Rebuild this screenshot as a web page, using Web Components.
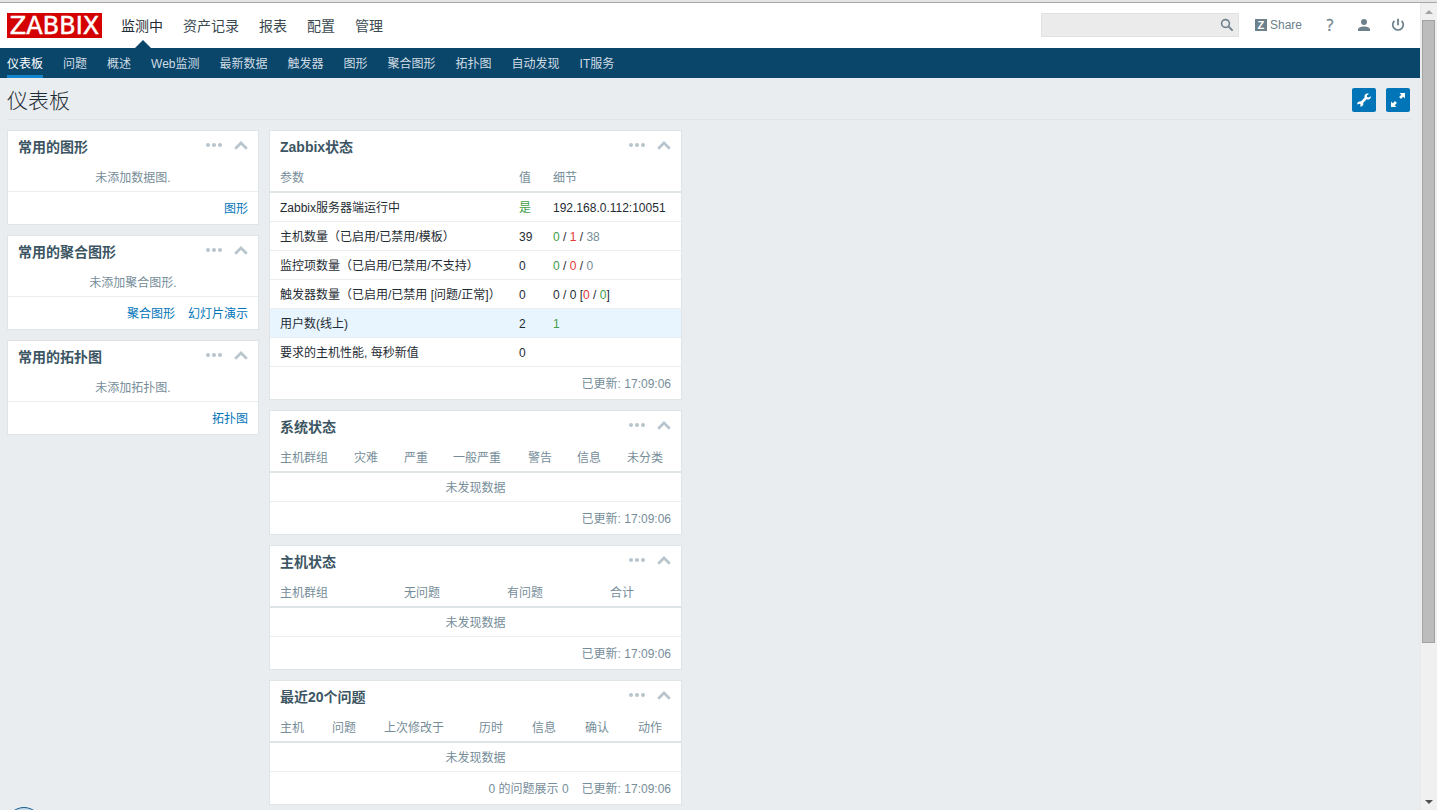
<!DOCTYPE html>
<html lang="zh-CN">
<head>
<meta charset="utf-8">
<title>Zabbix - 仪表板</title>
<style>
  html, body { margin: 0; height: 100%; }
  body {
    overflow: hidden;
    font: 12px/16px "Liberation Sans", "Noto Sans CJK SC", sans-serif;
    color: #1f2c33;
    background: #e9edf0;
  }
</style>
</head>
<body>
<zbx-app></zbx-app>
<script>
const define = (name, html, setup) => {
  const template = document.createElement('template');
  template.innerHTML = html;
  customElements.define(name, class extends HTMLElement {
    constructor() {
      super();
      this.attachShadow({ mode: 'open' }).append(template.content.cloneNode(true));
    }
    connectedCallback() { if (setup) setup(this, this.shadowRoot); }
  });
};

/* ---------- icons ---------- */
const ICONS = {
  search: [14, 14, '<circle cx="5.5" cy="5.5" r="3.9" fill="none" stroke="currentColor" stroke-width="1.6"/><path d="M8.4 8.4 12.6 12.6" stroke="currentColor" stroke-width="2"/>'],
  user: [12, 12, '<circle cx="6" cy="3" r="3" fill="currentColor"/><path d="M0 12V10.8C0 8.6 2.8 7.6 6 7.6s6 1 6 3.2V12z" fill="currentColor"/>'],
  power: [14, 14, '<path d="M3.400 2.800A5.300 5.300 0 1 0 10.600 2.800" fill="none" stroke="currentColor" stroke-width="1.7"/><path d="M7 .8V7.200" stroke="currentColor" stroke-width="1.8"/>'],
  wrench: [24, 24, '<path d="M18.900 8.200 16.600 9.500 15 8.900 14.900 7.500 16.900 5.700C15.100 5.100 13.300 5.700 12.700 7.300 12.400 8.100 12.400 8.900 12.600 9.500L9.200 13.300C7.600 12.900 5.800 13.800 5.200 15.400L5.200 16.500 7.400 15.700 8.600 16.600 8.200 18.500 9.200 18.500C10.900 18 11.600 16.500 11.200 14.900L14.600 11.300C15.600 11.600 16.600 11.600 17.500 11 18.600 10.300 19.100 9.300 18.900 8.200Z" fill="currentColor"/>'],
  expand: [24, 24, '<path d="M13.500 5H19V10.500L17.200 8.700 15 10.900 13.100 9 15.300 6.800ZM5 13.500 6.800 15.300 9 13.100 10.900 15 8.700 17.200 10.500 19H5Z" fill="currentColor"/>'],
  dots: [16, 4, '<circle cx="2" cy="2" r="2" fill="currentColor"/><circle cx="8" cy="2" r="2" fill="currentColor"/><circle cx="14" cy="2" r="2" fill="currentColor"/>'],
  chevron: [14, 9, '<path d="M1.200 7.700 7 2 12.800 7.700" fill="none" stroke="currentColor" stroke-width="2.700"/>'],
  up: [8, 4, '<path d="M0 4 4 0 8 4Z" fill="currentColor"/>'],
  down: [8, 4, '<path d="M0 0H8L4 4Z" fill="currentColor"/>']
};
define('zbx-icon', `<style>:host{display:block;flex:none}svg{display:block}</style>`, (host, root) => {
  const [w, h, body] = ICONS[host.getAttribute('name')];
  root.innerHTML += `<svg width="${w}" height="${h}" viewBox="0 0 ${w} ${h}" aria-hidden="true">${body}</svg>`;
});

/* ---------- header ---------- */
define('zbx-logo', `
<style>
  :host { display: block; }
  a { display: flex; align-items: center; justify-content: center; box-sizing: border-box; width: 95px; height: 25px;
      padding-top: 1px; background: #d40000; color: #fff; text-decoration: none;
      font: 24px/24px "DejaVu Sans", sans-serif; -webkit-text-stroke: 0.5px #fff; }
</style>
<a href="#">ZABBIX</a>`);

define('zbx-header', `
<style>
  :host { display: flex; align-items: center; box-sizing: border-box; height: 45px; padding: 0 15px 0 7px; background: #fff; }
  nav { display: flex; gap: 20px; margin-left: 19px; align-self: stretch; }
  nav a { display: flex; align-items: center; position: relative; color: #3c4a52;
          font-size: 14px; text-decoration: none; }
  nav a.on { color: #1f2c33; }
  nav a.on::after { content: ""; position: absolute; bottom: 0; left: 50%; margin-left: -7px;
          border: 8px solid transparent; border-top: 0; border-bottom-color: #0a466a; }
  form { display: flex; align-items: center; box-sizing: border-box; width: 198px; height: 24px;
         margin: 0 0 1px auto; background: #ebebeb; border: 1px solid #e0e3e4; }
  input { flex: 1; min-width: 0; height: 22px; padding: 0 5px; border: 0; outline: 0; background: none; font: inherit; }
  button { padding: 0; border: 0; background: none; color: #6d818c; cursor: pointer; font: inherit; }
  form button { margin-right: 4px; }
  .tools { display: flex; align-items: center; margin: 0 0 2px 16px; color: #6d818c; }
  .share { display: flex; align-items: center; gap: 3px; color: #6d818c; text-decoration: none; }
  .share b { width: 12px; height: 12px; background: #6d818c; color: #fff; text-align: center; font-size: 11px; line-height: 12px; }
  .help { width: 12px; margin-left: 22px; text-align: center; color: #6d818c; text-decoration: none;
          font: 16px/20px "Open Sans", sans-serif; -webkit-text-stroke: 0.3px; }
  .user { margin-left: 22px; }
  .power { margin-left: 21px; }
</style>
<zbx-logo></zbx-logo>
<nav><a class="on" href="#">监测中</a><a href="#">资产记录</a><a href="#">报表</a><a href="#">配置</a><a href="#">管理</a></nav>
<form><input type="text" aria-label="搜索"><button type="button" aria-label="搜索"><zbx-icon name="search"></zbx-icon></button></form>
<div class="tools">
  <a class="share" href="#"><b>Z</b>Share</a>
  <a class="help" href="#">?</a>
  <button class="user" aria-label="用户"><zbx-icon name="user"></zbx-icon></button>
  <button class="power" aria-label="退出"><zbx-icon name="power"></zbx-icon></button>
</div>`);

define('zbx-subnav', `
<style>
  :host { display: block; background: #0a466a; }
  nav { display: flex; gap: 20px; height: 30px; padding: 0 7px; }
  a { display: flex; align-items: center; box-sizing: border-box; padding-top: 2px; border: solid transparent; border-width: 3px 0;
      color: #d0dce4; text-decoration: none; white-space: nowrap; }
  a.on { color: #fff; border-bottom-color: #1485cc; }
</style>
<nav><a class="on" href="#">仪表板</a><a href="#">问题</a><a href="#">概述</a><a href="#">Web监测</a><a href="#">最新数据</a><a href="#">触发器</a><a href="#">图形</a><a href="#">聚合图形</a><a href="#">拓扑图</a><a href="#">自动发现</a><a href="#">IT服务</a></nav>`);

define('zbx-title', `
<style>
  :host { display: flex; align-items: center; gap: 10px; box-sizing: border-box; height: 42px;
          margin: 0 10px 10px 7px; border-bottom: 1px solid #dfe4e7; padding-top: 2px; }
  h1 { flex: 1; margin: 0; padding-top: 2px; font-size: 21px; line-height: 24px; font-weight: 300; }
  button { width: 24px; height: 24px; padding: 0; border: 0; border-radius: 2px; background: #0275b8; color: #fff; }
</style>
<h1><slot></slot></h1>
<button aria-label="配置仪表板"><zbx-icon name="wrench"></zbx-icon></button>
<button aria-label="全屏"><zbx-icon name="expand"></zbx-icon></button>`);

/* ---------- dashboard widget ---------- */
define('zbx-widget', `
<style>
  :host { display: block; background: #fff; border: 1px solid #dfe4e7; }
  header { display: flex; align-items: center; height: 32px; padding: 0 10px; }
  h4 { flex: 1; margin: 0; font-size: 14px; color: #3c5563; }
  .acts { display: flex; align-items: center; gap: 12px; height: 28px; align-self: flex-start; }
  button { padding: 0; border: 0; background: none; color: #b8c5cc; }
  footer { display: flex; justify-content: flex-end; align-items: center; gap: 13px; box-sizing: border-box; height: 32px;
           padding: 2px 10px 0; color: #768d99; }
</style>
<header><h4></h4><div class="acts">
  <button aria-label="菜单"><zbx-icon name="dots"></zbx-icon></button>
  <button aria-label="折叠"><zbx-icon name="chevron"></zbx-icon></button></div></header>
<slot></slot>
<footer><slot name="foot"></slot></footer>`, (host, root) => {
  root.querySelector('h4').textContent = host.getAttribute('heading');
});

define('zbx-empty', `
<style>
  :host { display: block; box-sizing: border-box; height: 29px; padding-top: 1px; line-height: 28px; text-align: center; color: #768d99; border-bottom: 1px solid #ebeef0; }
</style><slot></slot>`);

define('zbx-link', `
<style>a { color: #0275b8; text-decoration: none; }</style><a href="#"><slot></slot></a>`);

/* Column weights are shared out as percentages of the table's width. */
const TABLES = {
  zabbix: {
    weights: [244, 34, 133],
    head: ['参数', '值', '细节'],
    rows: [
      ['Zabbix服务器端运行中', '<i class="g">是</i>', '192.168.0.112:10051'],
      ['主机数量（已启用/已禁用/模板）', '39', '<i class="g">0</i> / <i class="r">1</i> / <i class="n">38</i>'],
      ['监控项数量（已启用/已禁用/不支持）', '0', '<i class="g">0</i> / <i class="r">0</i> / <i class="n">0</i>'],
      ['触发器数量（已启用/已禁用 [问题/正常]）', '0', '0 / 0 [<i class="r">0</i> / <i class="g">0</i>]'],
      ['用户数(线上)', '2', '<i class="g">1</i>'],
      ['要求的主机性能, 每秒新值', '0', '']
    ],
    active: 4
  },
  system: { weights: [79, 50, 49, 75, 49, 50, 59], head: ['主机群组', '灾难', '严重', '一般严重', '警告', '信息', '未分类'] },
  hosts: { weights: [129, 103, 103, 76], head: ['主机群组', '无问题', '有问题', '合计'] },
  issues: { weights: [57, 52, 95, 53, 53, 53, 48], head: ['主机', '问题', '上次修改于', '历时', '信息', '确认', '动作'] }
};
define('zbx-table', `
<style>
  :host { display: block; }
  table { width: 100%; table-layout: fixed; border-collapse: separate; border-spacing: 0; }
  th, td { box-sizing: border-box; padding: 1px 0 0 5px; text-align: left; font-weight: normal; white-space: nowrap; }
  th:first-child, td:first-child { padding-left: 10px; }
  th { height: 30px; padding-top: 2px; color: #768d99; border-bottom: 2px solid #dfe4e7; }
  td { height: 29px; border-bottom: 1px solid #ebeef0; }
  tr.active td { background: #e8f5ff; }
  td.none { padding: 2px 0 0; text-align: center; color: #768d99; }
  i { font-style: normal; }
  .g { color: #429e47; } .r { color: #e33734; } .n { color: #768d99; }
</style>
<table></table>`, (host, root) => {
  const t = TABLES[host.getAttribute('name')];
  const sum = t.weights.reduce((a, b) => a + b, 0);
  const cols = t.weights.map(w => `<col style="width:calc(100% * ${w} / ${sum})">`).join('');
  const head = t.head.map(h => `<th scope="col">${h}</th>`).join('');
  const body = t.rows
    ? t.rows.map((r, i) => `<tr${i === t.active ? ' class="active"' : ''}>${r.map(c => `<td>${c}</td>`).join('')}</tr>`).join('')
    : `<tr><td class="none" colspan="${t.head.length}">未发现数据</td></tr>`;
  root.querySelector('table').innerHTML = `<colgroup>${cols}</colgroup><thead><tr>${head}</tr></thead><tbody>${body}</tbody>`;
});

/* ---------- window scroll bar ---------- */
define('zbx-rail', `
<style>
  :host { display: flex; flex-direction: column; box-sizing: border-box; width: 17px; background: #f0f0f0; border-left: 1px solid #e9e9ec; }
  .end { display: flex; align-items: center; justify-content: center; height: 17px; color: #a3a3a3; }
  .end:last-child { color: #505050; }
  .track { display: flex; flex-direction: column; flex: 1; padding: 0 2px 0 1px; }
  .thumb { flex: 623; box-sizing: border-box; background: #bcbcbc; border: 1px solid #a2a2a2; }
  .rest { flex: 150; }
</style>
<div class="end"><zbx-icon name="up"></zbx-icon></div>
<div class="track"><div class="thumb"></div><div class="rest"></div></div>
<div class="end"><zbx-icon name="down"></zbx-icon></div>`);

/* ---------- page ---------- */
define('zbx-app', `
<style>
  :host { display: flex; flex-direction: column; height: 100vh; }
  .edge { flex: none; height: 2px; background: #e4e4e4; border-bottom: 1px solid #a8a8a8; }
  .window { display: flex; flex: 1; min-height: 0; }
  main { flex: 1; min-width: 0; overflow: hidden; }
  .board { display: grid; grid-template-columns: minmax(220px, 252fr) minmax(400px, 413fr) 718fr; gap: 10px; align-items: start; padding: 0 10px 5px 7px; }
  .col { display: grid; gap: 10px; }
  .bubble { position: fixed; left: 6px; bottom: -33px; box-sizing: border-box; width: 36px; height: 36px;
            border: 1px solid #1d5a88; border-radius: 50%; background: #c3dcee; }
</style>
<div class="edge"></div>
<div class="window">
  <main>
    <zbx-header></zbx-header>
    <zbx-subnav></zbx-subnav>
    <zbx-title>仪表板</zbx-title>
    <div class="board">
      <div class="col">
        <zbx-widget heading="常用的图形"><zbx-empty>未添加数据图.</zbx-empty><zbx-link slot="foot">图形</zbx-link></zbx-widget>
        <zbx-widget heading="常用的聚合图形"><zbx-empty>未添加聚合图形.</zbx-empty><zbx-link slot="foot">聚合图形</zbx-link><zbx-link slot="foot">幻灯片演示</zbx-link></zbx-widget>
        <zbx-widget heading="常用的拓扑图"><zbx-empty>未添加拓扑图.</zbx-empty><zbx-link slot="foot">拓扑图</zbx-link></zbx-widget>
      </div>
      <div class="col">
        <zbx-widget heading="Zabbix状态"><zbx-table name="zabbix"></zbx-table><span slot="foot">已更新: 17:09:06</span></zbx-widget>
        <zbx-widget heading="系统状态"><zbx-table name="system"></zbx-table><span slot="foot">已更新: 17:09:06</span></zbx-widget>
        <zbx-widget heading="主机状态"><zbx-table name="hosts"></zbx-table><span slot="foot">已更新: 17:09:06</span></zbx-widget>
        <zbx-widget heading="最近20个问题"><zbx-table name="issues"></zbx-table><span slot="foot">0 的问题展示 0</span><span slot="foot">已更新: 17:09:06</span></zbx-widget>
      </div>
    </div>
  </main>
  <zbx-rail></zbx-rail>
</div>
<div class="bubble"></div>`);
</script>
</body>
</html>
